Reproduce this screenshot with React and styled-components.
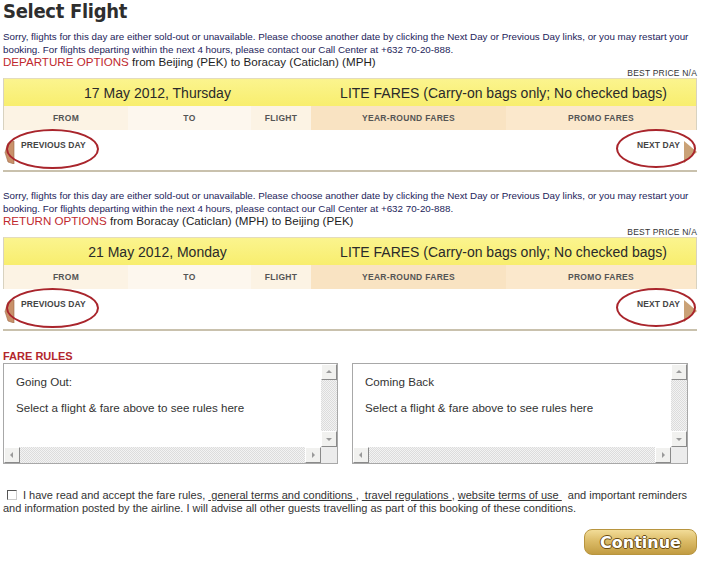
import styled, { createGlobalStyle } from 'styled-components'

const GlobalStyle = createGlobalStyle`
  body {
    margin: 0;
    background: #ffffff;
    font-family: "Liberation Sans", Arial, sans-serif;
  }
`

const SORRY_1 = 'Sorry, flights for this day are either sold-out or unavailable. Please choose another date by clicking the Next Day or Previous Day links, or you may restart your'
const SORRY_2 = 'booking. For flights departing within the next 4 hours, please contact our Call Center at +632 70-20-888.'

const legs = [
  { label: 'DEPARTURE OPTIONS', route: 'from Beijing (PEK) to Boracay (Caticlan) (MPH)', date: '17 May 2012, Thursday' },
  { label: 'RETURN OPTIONS', route: 'from Boracay (Caticlan) (MPH) to Beijing (PEK)', date: '21 May 2012, Monday' },
]

function Arrow({ dir }) {
  if (dir === 'left') {
    return (
      <svg width="12" height="23" viewBox="0 0 12 23">
        <polygon points="2,11.5 5,2 11,0 11,23 5,21" fill="#c8916a" stroke="#9c6a48" strokeWidth="0.6" />
      </svg>
    )
  }
  return (
    <svg width="13" height="22" viewBox="0 0 13 22">
      <polygon points="0,0 13,11 0,22" fill="#caa277" />
    </svg>
  )
}

function ScrollArrow({ dir }) {
  const pts = {
    up: '1,5 4,2 7,5',
    down: '1,3 4,6 7,3',
    left: '5,1 2,4 5,7',
    right: '3,1 6,4 3,7',
  }
  return (
    <svg width="8" height="8" viewBox="0 0 8 8">
      <polygon points={pts[dir]} fill="#9a9a9a" />
    </svg>
  )
}

function FlightLeg({ leg }) {
  return (
    <Leg>
      <Notice>
        {SORRY_1}
        <br />
        {SORRY_2}
      </Notice>
      <RouteLine>
        <RouteLabel>{leg.label}</RouteLabel> {leg.route}
      </RouteLine>
      <BestPrice>BEST PRICE N/A</BestPrice>
      <FareTable>
        <DateCell $span={3}>{leg.date}</DateCell>
        <DateCell $span={2}>LITE FARES (Carry-on bags only; No checked bags)</DateCell>
        <HeadCell>FROM</HeadCell>
        <HeadCell $light>TO</HeadCell>
        <HeadCell>FLIGHT</HeadCell>
        <HeadCell $fare>YEAR-ROUND FARES</HeadCell>
        <HeadCell $fare $light>PROMO FARES</HeadCell>
      </FareTable>
      <DayNav>
        <DayLink>
          <Ring $w={93} $h={40} $left={3} />
          <Arrow dir="left" />
          <DayText $pad={6}>PREVIOUS DAY</DayText>
        </DayLink>
        <DayLink>
          <Ring $w={80} $h={39} $left={-17} />
          <DayText $pad={4}>NEXT DAY</DayText>
          <Arrow dir="right" />
        </DayLink>
      </DayNav>
    </Leg>
  )
}

function RuleBox({ title }) {
  return (
    <RuleFrame>
      <RuleText>
        <p>{title}</p>
        <p>Select a flight &amp; fare above to see rules here</p>
      </RuleText>
      <VTrack>
        <ScrollBtn><ScrollArrow dir="up" /></ScrollBtn>
        <ScrollBtn><ScrollArrow dir="down" /></ScrollBtn>
      </VTrack>
      <HTrack>
        <ScrollBtn><ScrollArrow dir="left" /></ScrollBtn>
        <ScrollBtn><ScrollArrow dir="right" /></ScrollBtn>
      </HTrack>
      <Corner />
    </RuleFrame>
  )
}

export default function App() {
  return (
    <>
      <GlobalStyle />
      <Page>
        <Title>Select Flight</Title>
        {legs.map((leg) => (
          <FlightLeg key={leg.label} leg={leg} />
        ))}
        <SectionTitle>FARE RULES</SectionTitle>
        <RulesGrid>
          <RuleBox title="Going Out:" />
          <RuleBox title="Coming Back" />
        </RulesGrid>
        <Agreement>
          <CheckBox />
          I have read and accept the fare rules, <TermLink> general terms and conditions </TermLink>,{' '}
          <TermLink> travel regulations </TermLink>, <TermLink>website terms of use </TermLink>&nbsp; and important reminders
          <br />
          and information posted by the airline. I will advise all other guests travelling as part of this booking of these conditions.
        </Agreement>
        <Actions>
          <ContinueButton>Continue</ContinueButton>
        </Actions>
      </Page>
    </>
  )
}

const Page = styled.div`
  width: 694px;
  margin-left: 3px;
`

const Title = styled.h1`
  margin: 0 0 8px 0;
  font-family: "DejaVu Sans Condensed", "DejaVu Sans", sans-serif;
  font-stretch: condensed;
  font-size: 20px;
  line-height: 22px;
  font-weight: bold;
  letter-spacing: -0.3px;
  color: #2e2e2e;
`

const Leg = styled.section`
  & + & {
    margin-top: 17px;
  }
`

const Notice = styled.p`
  margin: 0;
  font-size: 9.8px;
  line-height: 13px;
  color: #23235a;
  white-space: nowrap;
`

const RouteLine = styled.div`
  font-size: 11.6px;
  line-height: 12px;
  color: #1e1e1e;
`

const RouteLabel = styled.span`
  color: #c0282e;
`

const BestPrice = styled.div`
  text-align: right;
  font-size: 8.5px;
  line-height: 10px;
  color: #333;
  letter-spacing: 0.2px;
`

const FareTable = styled.div`
  display: grid;
  grid-template-columns: 124px 123px 60px 195px 1fr;
  grid-template-rows: 27px 24px;
  border-top: 1px solid #e4dcbc;
  border-left: 1px solid #d8d2c0;
  border-right: 1px solid #d8d2c0;
`

const DateCell = styled.div`
  grid-column: span ${(p) => p.$span};
  display: flex;
  align-items: center;
  justify-content: center;
  background: linear-gradient(#fbf48e, #f8ee6e);
  font-size: 14px;
  color: #2a2a2a;
`

const HeadCell = styled.div`
  display: flex;
  align-items: center;
  justify-content: center;
  background: ${(p) => (p.$fare ? (p.$light ? '#fbe8cc' : '#f9e3c2') : p.$light ? '#fdf7ee' : '#fcf3e4')};
  font-size: 8.5px;
  font-weight: bold;
  letter-spacing: 0.3px;
  color: #555;
`

const DayNav = styled.div`
  display: flex;
  justify-content: space-between;
  height: 40px;
  border-bottom: 2px solid #c9c1ad;
`

const DayLink = styled.div`
  position: relative;
  display: flex;
  align-items: flex-start;
  padding-top: 11px;
`

const DayText = styled.span`
  margin: 0 ${(p) => p.$pad}px;
  margin-top: -1px;
  font-size: 8.5px;
  font-weight: bold;
  color: #444;
  letter-spacing: 0.1px;
`

const Ring = styled.span`
  position: absolute;
  top: -1px;
  left: ${(p) => p.$left}px;
  width: ${(p) => p.$w}px;
  height: ${(p) => p.$h}px;
  box-sizing: border-box;
  border: 2px solid #a9252c;
  border-radius: 50%;
`

const SectionTitle = styled.h2`
  margin: 19px 0 1px 0;
  font-size: 11px;
  line-height: 12px;
  font-weight: bold;
  color: #b3262c;
`

const RulesGrid = styled.div`
  display: grid;
  grid-template-columns: 335px 336px;
  column-gap: 14px;
`

const RuleFrame = styled.div`
  display: grid;
  grid-template-columns: 1fr 16px;
  grid-template-rows: 1fr 16px;
  height: 101px;
  box-sizing: border-box;
  border: 1px solid #a8a8a8;
  background: #fff;
`

const RuleText = styled.div`
  padding: 11px 12px 0 12px;
  font-size: 11.6px;
  line-height: 14px;
  color: #333;

  p {
    margin: 0 0 12px 0;
  }
`

const hatch = 'repeating-conic-gradient(#dcdcdc 0 25%, #f3f3f3 0 50%) 0 0 / 2px 2px'

const VTrack = styled.div`
  display: flex;
  flex-direction: column;
  justify-content: space-between;
  background: ${hatch};
`

const HTrack = styled.div`
  display: flex;
  justify-content: space-between;
  background: ${hatch};
`

const Corner = styled.div`
  background: #ececec;
`

const ScrollBtn = styled.div`
  width: 16px;
  height: 16px;
  box-sizing: border-box;
  display: flex;
  align-items: center;
  justify-content: center;
  background: #f1f1ef;
  border: 1px solid;
  border-color: #ffffff #8a8a8a #8a8a8a #ffffff;
`

const Agreement = styled.p`
  margin: 25px 0 0 0;
  font-size: 11px;
  line-height: 13px;
  color: #333;
  white-space: nowrap;
`

const CheckBox = styled.span`
  display: inline-block;
  width: 10px;
  height: 10px;
  margin: 0 6px 0 4px;
  vertical-align: -1px;
  box-sizing: border-box;
  border: 1px solid;
  border-color: #555 #ccc #ccc #555;
  background: #fff;
`

const TermLink = styled.a`
  color: #333;
  text-decoration: underline;
  white-space: pre;
`

const Actions = styled.div`
  display: flex;
  justify-content: flex-end;
  margin-top: 14px;
`

const ContinueButton = styled.button`
  width: 113px;
  height: 26px;
  border: 1px solid #b8953f;
  border-radius: 8px;
  background: linear-gradient(#f2dc98 0%, #dcbc68 45%, #c29c42 100%);
  font-family: "DejaVu Sans", sans-serif;
  font-size: 16px;
  font-weight: bold;
  color: #fff;
  text-shadow: -1px 0 #6a4c12, 1px 0 #6a4c12, 0 -1px #6a4c12, 0 1px #6a4c12;
  cursor: pointer;
  padding: 0;
`
